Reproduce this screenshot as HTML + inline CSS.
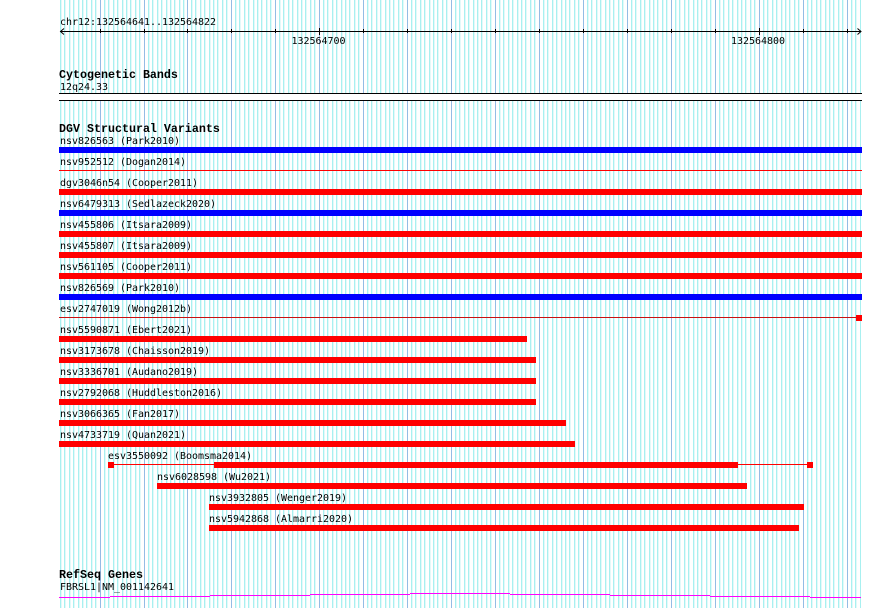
<!DOCTYPE html>
<html>
<head>
<meta charset="utf-8">
<style>
html,body{margin:0;padding:0;background:#fff;width:890px;height:608px;overflow:hidden}
svg{display:block}
text{font-family:"DejaVu Sans Mono","Liberation Mono",monospace;font-size:10px;fill:#000;letter-spacing:-0.02px}
text.h{font-family:"Liberation Mono","DejaVu Sans Mono",monospace;font-weight:bold;font-size:11.67px;fill:#000;letter-spacing:0}
</style>
</head>
<body>
<svg width="890" height="608" viewBox="0 0 890 608" xmlns="http://www.w3.org/2000/svg" shape-rendering="crispEdges">
<defs>
<path id="p" d="M4.5 0V608M8.5 0V608M13.5 0V608M17.5 0V608M22.5 0V608M26.5 0V608M30.5 0V608M35.5 0V608M39.5 0V608" fill="none"/>
<g id="g">
<use href="#p" x="1" stroke="#e2f9f9"/>
<use href="#p" stroke="#a8f0f0"/>
</g>
</defs>
<rect width="890" height="608" fill="#fff"/>
<path d="M61.5 0V608M65.5 0V608M70.5 0V608M74.5 0V608M79.5 0V608M83.5 0V608M87.5 0V608M92.5 0V608M96.5 0V608M852.5 0V608M856.5 0V608" stroke="#e2f9f9" fill="none"/>
<path d="M60.5 0V608M64.5 0V608M69.5 0V608M73.5 0V608M78.5 0V608M82.5 0V608M86.5 0V608M91.5 0V608M95.5 0V608M851.5 0V608M855.5 0V608M860.5 0V608" stroke="#a8f0f0" fill="none"/>
<use href="#g" x="100"/><use href="#g" x="144"/><use href="#g" x="187"/><use href="#g" x="231"/><use href="#g" x="275"/><use href="#g" x="319"/><use href="#g" x="363"/><use href="#g" x="407"/><use href="#g" x="451"/><use href="#g" x="495"/><use href="#g" x="539"/><use href="#g" x="583"/><use href="#g" x="627"/><use href="#g" x="671"/><use href="#g" x="715"/><use href="#g" x="759"/><use href="#g" x="803"/>
<path d="M100.5 0V608M144.5 0V608M187.5 0V608M231.5 0V608M275.5 0V608M319.5 0V608M363.5 0V608M407.5 0V608M451.5 0V608M495.5 0V608M539.5 0V608M583.5 0V608M627.5 0V608M671.5 0V608M715.5 0V608M759.5 0V608M803.5 0V608M847.5 0V608" stroke="#94bce4" fill="none"/>

<!-- ruler -->
<path d="M60 31.5H861" stroke="#000" fill="none"/>
<path d="M100.5 29V33M144.5 29V33M187.5 29V33M231.5 29V33M275.5 29V33M363.5 29V33M407.5 29V33M451.5 29V33M495.5 29V33M539.5 29V33M583.5 29V33M627.5 29V33M671.5 29V33M715.5 29V33M803.5 29V33M847.5 29V33M319.5 28V35M759.5 28V35" stroke="#000" fill="none"/>
<path d="M64 28.5L60.5 31.5L64 34.5M857.5 28.5L861 31.5L857.5 34.5" stroke="#000" fill="none" shape-rendering="auto"/>
<text x="60" y="25">chr12:132564641..132564822</text>
<text x="291.5" y="44">132564700</text>
<text x="731" y="44">132564800</text>

<!-- cytogenetic -->
<text class="h" x="59" y="78">Cytogenetic Bands</text>
<text x="60" y="90">12q24.33</text>
<rect x="59" y="94" width="803" height="6" fill="#fff"/>
<rect x="59" y="93" width="803" height="1" fill="#000"/>
<rect x="59" y="100" width="803" height="1" fill="#000"/>

<!-- DGV -->
<text class="h" x="59" y="132">DGV Structural Variants</text>
<text x="60" y="144">nsv826563 (Park2010)</text>
<rect x="59" y="147" width="803" height="6" fill="#0000ff"/>
<text x="60" y="165">nsv952512 (Dogan2014)</text>
<rect x="59" y="170" width="803" height="1" fill="#ff0000"/>
<text x="60" y="186">dgv3046n54 (Cooper2011)</text>
<rect x="59" y="189" width="803" height="6" fill="#ff0000"/>
<text x="60" y="207">nsv6479313 (Sedlazeck2020)</text>
<rect x="59" y="210" width="803" height="6" fill="#0000ff"/>
<text x="60" y="228">nsv455806 (Itsara2009)</text>
<rect x="59" y="231" width="803" height="6" fill="#ff0000"/>
<text x="60" y="249">nsv455807 (Itsara2009)</text>
<rect x="59" y="252" width="803" height="6" fill="#ff0000"/>
<text x="60" y="270">nsv561105 (Cooper2011)</text>
<rect x="59" y="273" width="803" height="6" fill="#ff0000"/>
<text x="60" y="291">nsv826569 (Park2010)</text>
<rect x="59" y="294" width="803" height="6" fill="#0000ff"/>
<text x="60" y="312">esv2747019 (Wong2012b)</text>
<rect x="59" y="317" width="803" height="1" fill="#c81010"/>
<rect x="856" y="315" width="6" height="6" fill="#ff0000"/>
<text x="60" y="333">nsv5590871 (Ebert2021)</text>
<rect x="59" y="336" width="468" height="6" fill="#ff0000"/>
<text x="60" y="354">nsv3173678 (Chaisson2019)</text>
<rect x="59" y="357" width="477" height="6" fill="#ff0000"/>
<text x="60" y="375">nsv3336701 (Audano2019)</text>
<rect x="59" y="378" width="477" height="6" fill="#ff0000"/>
<text x="60" y="396">nsv2792068 (Huddleston2016)</text>
<rect x="59" y="399" width="477" height="6" fill="#ff0000"/>
<text x="60" y="417">nsv3066365 (Fan2017)</text>
<rect x="59" y="420" width="507" height="6" fill="#ff0000"/>
<text x="60" y="438">nsv4733719 (Quan2021)</text>
<rect x="59" y="441" width="516" height="6" fill="#ff0000"/>
<text x="108" y="459">esv3550092 (Boomsma2014)</text>
<rect x="108" y="462" width="6" height="6" fill="#ff0000"/>
<rect x="114" y="464" width="693" height="1" fill="#ff0000"/>
<rect x="214" y="462" width="524" height="6" fill="#ff0000"/>
<rect x="807" y="462" width="6" height="6" fill="#ff0000"/>
<text x="157" y="480">nsv6028598 (Wu2021)</text>
<rect x="157" y="483" width="590" height="6" fill="#ff0000"/>
<text x="209" y="501">nsv3932805 (Wenger2019)</text>
<rect x="209" y="504" width="595" height="6" fill="#ff0000"/>
<text x="209" y="522">nsv5942868 (Almarri2020)</text>
<rect x="209" y="525" width="590" height="6" fill="#ff0000"/>

<!-- RefSeq -->
<text class="h" x="59" y="578">RefSeq Genes</text>
<text x="60" y="590">FBRSL1|NM_001142641</text>
<g fill="#ff00ff">
<rect x="59" y="597" width="51" height="1"/>
<rect x="110" y="596" width="100" height="1"/>
<rect x="210" y="595" width="100" height="1"/>
<rect x="310" y="594" width="100" height="1"/>
<rect x="410" y="593" width="100" height="1"/>
<rect x="510" y="594" width="100" height="1"/>
<rect x="610" y="595" width="100" height="1"/>
<rect x="710" y="596" width="100" height="1"/>
<rect x="810" y="597" width="51" height="1"/>
</g>
</svg>
</body>
</html>
